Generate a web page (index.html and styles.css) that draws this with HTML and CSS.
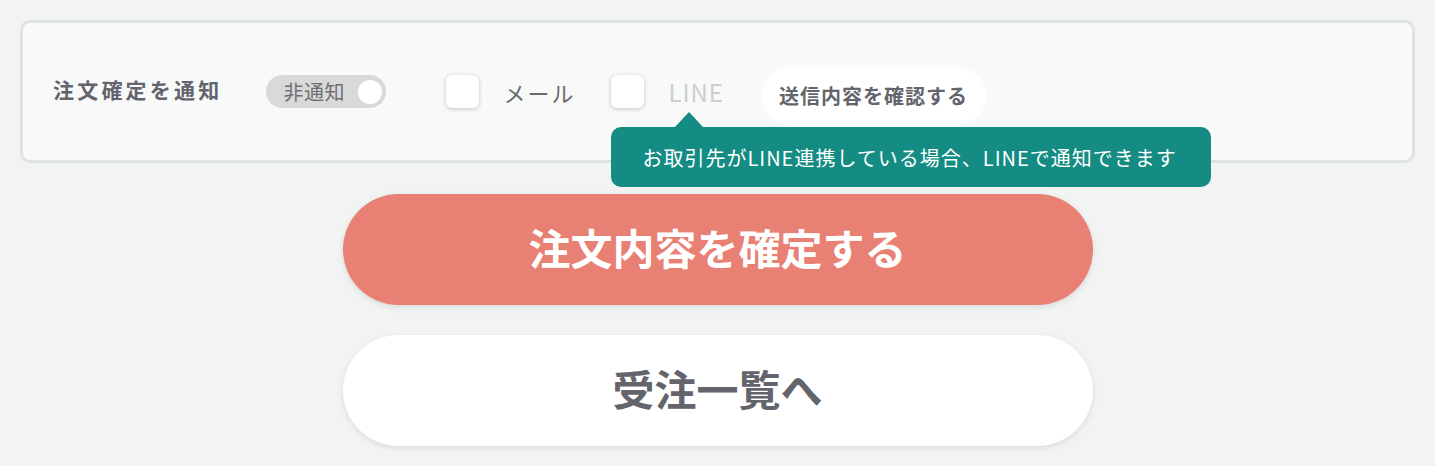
FILE: index.html
```html
<!DOCTYPE html>
<html lang="ja">
<head>
    <meta charset="UTF-8">
    <meta name="viewport" content="width=device-width, initial-scale=1.0">
    <title>注文確定</title>
    <link rel="stylesheet" href="styles.css">
</head>
<body>
    <section class="notify-panel">
        <h2 class="notify-title">注文確定を通知</h2>

        <label class="switch">
            <span class="switch-text">非通知</span>
            <span class="switch-knob"></span>
        </label>

        <label class="option">
            <input type="checkbox" class="check">
            <span class="option-text">メール</span>
        </label>

        <label class="option option-line">
            <input type="checkbox" class="check">
            <span class="option-text disabled">LINE</span>
            <span class="tooltip">お取引先がLINE連携している場合、LINEで通知できます</span>
        </label>

        <button class="preview-btn">送信内容を確認する</button>
    </section>

    <div class="actions">
        <button class="btn btn-confirm">注文内容を確定する</button>
        <button class="btn btn-back">受注一覧へ</button>
    </div>
</body>
</html>
```

FILE: styles.css
```css
* {
    margin: 0;
    padding: 0;
    box-sizing: border-box;
}
body {
    font-family: "Noto Sans CJK JP", "Noto Sans", sans-serif;
    background-color: #f2f4f4;
    color: #63646c;
    padding: 20px;
}
button {
    font-family: inherit;
    border: none;
    cursor: pointer;
}
.notify-panel {
    display: flex;
    align-items: center;
    height: 143px;
    padding: 0 30px;
    background-color: #f8f9f9;
    border: 3px solid #e0e4e1;
    border-radius: 10px;
}
.notify-title {
    font-size: 21px;
    font-weight: bold;
    letter-spacing: 3.2px;
    color: #63646c;
    margin-bottom: 6px;
}
.switch {
    display: flex;
    align-items: center;
    justify-content: space-between;
    width: 120px;
    height: 33px;
    margin-left: 44px;
    padding: 0 4px 0 17px;
    background-color: #d9d9d9;
    border-radius: 17px;
}
.switch-text {
    font-size: 20px;
    letter-spacing: 0.5px;
    color: #6f6f72;
    line-height: 1;
}
.switch-knob {
    width: 24px;
    height: 24px;
    border-radius: 50%;
    background-color: #fff;
}
.option {
    display: flex;
    align-items: center;
    gap: 24px;
    margin-left: 60px;
}
.option-line {
    position: relative;
    margin-left: 36px;
}
.check {
    appearance: none;
    width: 33px;
    height: 33px;
    background-color: #fff;
    border-radius: 6px;
    box-shadow: 0 1px 4px rgba(70, 70, 110, 0.3);
}
.option-text {
    font-size: 22px;
    letter-spacing: 2px;
    color: #6b6c72;
}
.option-text.disabled {
    font-size: 24px;
    letter-spacing: 1px;
    color: #cdcdcf;
}
.tooltip {
    position: absolute;
    left: 0;
    top: calc(100% + 18px);
    height: 60px;
    padding: 0 34px 0 31px;
    display: flex;
    align-items: center;
    white-space: nowrap;
    font-size: 20px;
    letter-spacing: 1px;
    color: #fff;
    background-color: #148c83;
    border-radius: 10px;
    z-index: 2;
}
.tooltip::before {
    content: "";
    position: absolute;
    left: 64px;
    top: -15px;
    border-left: 14px solid transparent;
    border-right: 14px solid transparent;
    border-bottom: 15px solid #148c83;
}
.preview-btn {
    margin-left: 38px;
    margin-top: 8px;
    height: 58px;
    padding: 0 18px 0 17px;
    font-size: 20px;
    font-weight: bold;
    letter-spacing: 1px;
    color: #63646c;
    background-color: #fff;
    border-radius: 29px;
}
.actions {
    display: flex;
    flex-direction: column;
    align-items: center;
    gap: 30px;
    margin-top: 31px;
}
.btn {
    width: 750px;
    height: 111px;
    padding-bottom: 6px;
    border-radius: 56px;
    font-size: 42px;
    font-weight: bold;
    box-shadow: 0 2px 6px rgba(0, 0, 0, 0.1);
}
.btn-confirm {
    background-color: #e88074;
    color: #fff;
}
.btn-back {
    background-color: #fff;
    color: #63646c;
}
```
